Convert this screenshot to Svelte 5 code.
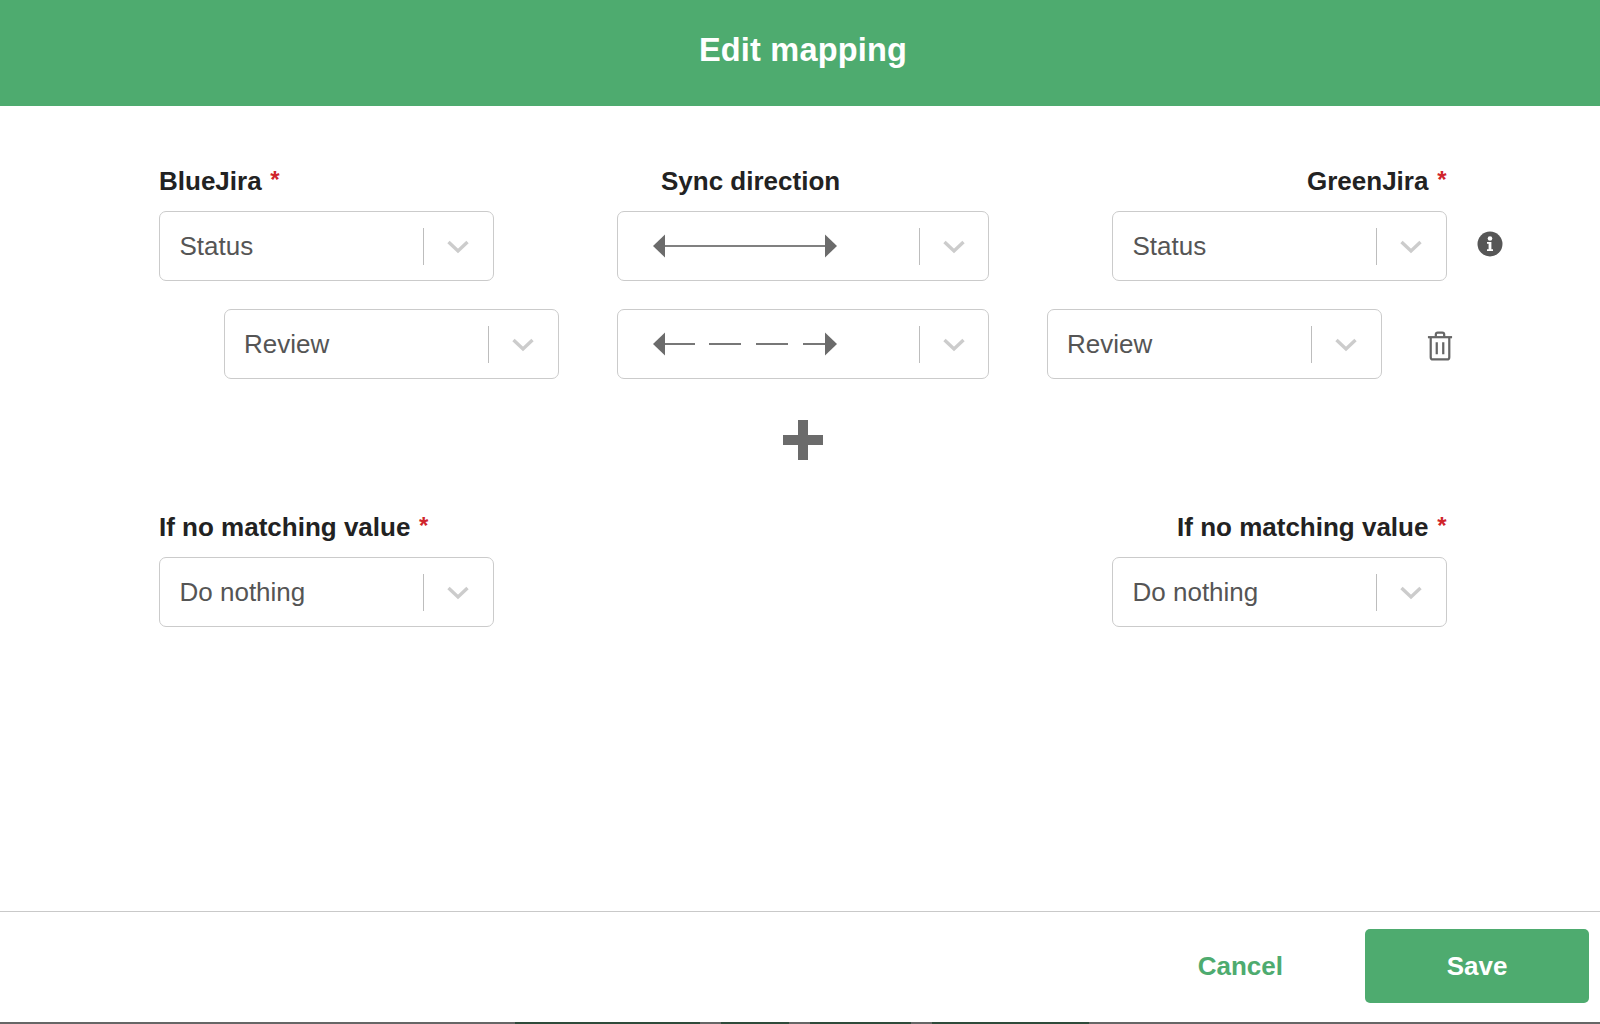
<script>
  const strip = [185, 68, 101, 157];
</script>

{#snippet chevron()}
  <span class="sep"></span>
  <svg class="chev" width="22" height="14" viewBox="0 0 22 14"><path d="M1.500 2 L11 11 L20.500 2" fill="none" stroke="#cccccc" stroke-width="3.400"/></svg>
{/snippet}

{#snippet select(text)}
  <div class="select"><span class="val">{text}</span>{@render chevron()}</div>
{/snippet}

{#snippet arrowSelect(dashed)}
  <div class="select wide">
    <span class="val arrow">
      <svg width="184" height="24" viewBox="0 0 184 24">
        {#if dashed}
          <path d="M12 12H42M56 12H88M103 12H135M150 12H172" stroke="#777" stroke-width="2" fill="none"/>
        {:else}
          <path d="M12 12H172" stroke="#808080" stroke-width="2" fill="none"/>
        {/if}
        <path d="M0 12L12 .5V23.500Z" fill="#6b6b6b"/>
        <path d="M184 12L172 .5V23.500Z" fill="#6b6b6b"/>
      </svg>
    </span>
    {@render chevron()}
  </div>
{/snippet}

<div class="modal">
  <header class="head"><h1>Edit mapping</h1></header>

  <main class="body">
    <div class="grid">
      <div class="label">BlueJira <i>*</i></div>
      <div class="label center">Sync direction</div>
      <div class="label right">GreenJira <i>*</i></div>
      <div></div>

      <div class="cell">{@render select('Status')}</div>
      {@render arrowSelect(false)}
      <div class="cell end">{@render select('Status')}</div>
      <div class="info">
        <svg width="26" height="26" viewBox="0 0 26 26"><circle cx="13" cy="13" r="12.500" fill="#565656"/><circle cx="13" cy="7.500" r="2.300" fill="#fff"/><path d="M10 11h4.400v7.200H16V20H10v-1.800h1.600v-5.400H10Z" fill="#fff"/></svg>
      </div>

      <div class="cell end">{@render select('Review')}</div>
      {@render arrowSelect(true)}
      <div class="cell withicon">
        {@render select('Review')}
        <svg class="trash" width="26" height="30" viewBox="0 0 28 32" fill="none" stroke="#666" stroke-width="2.400"><path d="M1 6.500H27"/><path d="M9.500 6V3.500q0-2 2-2h5q2 0 2 2V6"/><path d="M4 7V28q0 2.500 2.500 2.500h15Q24 30.500 24 28V7"/><path d="M10.500 12V25M17.500 12V25"/></svg>
      </div>
      <div></div>
    </div>

    <div class="plus"><span></span></div>

    <div class="nomatch">
      <div class="col">
        <div class="label">If no matching value <i>*</i></div>
        {@render select('Do nothing')}
      </div>
      <div class="col">
        <div class="label right">If no matching value <i>*</i></div>
        {@render select('Do nothing')}
      </div>
    </div>
  </main>

  <footer class="foot">
    <button class="cancel">Cancel</button>
    <button class="save">Save</button>
  </footer>
  <div class="strip">
    {#each strip as w}<span style="width:{w}px"></span>{/each}
  </div>
</div>

<style>
  :global(body) { margin: 0; background: #fff; }
  .modal {
    width: 1600px; height: 1024px; display: flex; flex-direction: column;
    font-family: "Liberation Sans", Arial, sans-serif; overflow: hidden; background: #fff;
  }
  .head {
    height: 106px; flex: none; background: #4eab6f; display: flex; align-items: center; justify-content: center;
    box-sizing: border-box; padding-left: 6px;
  }
  h1 { margin: 0 0 6px; color: #fff; font-size: 32.500px; font-weight: 700; line-height: 1.2; letter-spacing: .2px; }
  .body { flex: 1; padding: 60px 0 0 159px; box-sizing: border-box; }
  .grid {
    display: grid; grid-template-columns: 399.500px 372px 399.500px 60px;
    column-gap: 58.500px; row-gap: 28px; width: max-content;
  }
  .grid .label { margin-bottom: -14px; }
  .label { font-size: 26px; font-weight: 700; color: #222; line-height: 30px; white-space: nowrap; }
  .label i { color: #d0252b; font-style: normal; font-size: 24px; margin-left: 1.500px; position: relative; top: -2px; }
  .label.center { padding-left: 44px; }
  .label.right { text-align: right; padding-right: .5px; }
  .cell { display: flex; }
  .cell.end { justify-content: flex-end; }
  .withicon { align-items: center; gap: 45.500px; margin-left: -1px; }
  .select {
    width: 335px; height: 70px; box-sizing: border-box; flex: none;
    border: 1.500px solid #cbcbcb; border-radius: 7px; background: #fff;
    display: flex; align-items: center; padding: 0 24px 0 19.500px;
  }
  .select.wide { width: 372px; padding: 0 23px 0 35px; }
  .val { flex: 1; color: #555; font-size: 26px; line-height: 30px; }
  .arrow { display: flex; align-items: center; }
  .sep { width: 1px; height: 37px; background: #bdbdbd; margin-right: 23px; }
  .chev { display: block; flex: none; margin-top: 1px; }
  .info { display: flex; align-items: center; margin: -4px 0 0 -29px; }
  .trash { flex: none; margin-top: 3px; }
  .plus { display: flex; justify-content: center; padding: 41px 0 0; height: 40px; width: 1288px; }
  .plus span {
    width: 40px; height: 40px; border-radius: 2px; background:
      linear-gradient(#6b6b6b,#6b6b6b) center/40px 10px no-repeat,
      linear-gradient(#6b6b6b,#6b6b6b) center/10px 40px no-repeat;
  }
  .nomatch { display: flex; justify-content: space-between; width: 1288px; margin-top: 52px; }
  .col { display: flex; flex-direction: column; gap: 14px; width: 335px; }
  .foot {
    flex: none; height: 111px; box-sizing: border-box; border-top: 1.500px solid #c9c9c9;
    display: flex; align-items: center; justify-content: flex-end; padding: 0 11px 2px 0;
  }
  button { font: 700 26px "Liberation Sans", Arial, sans-serif; border: 0; cursor: pointer; }
  .cancel { background: none; color: #4eab6f; margin-right: 66px; padding: 0 16px; }
  .save { width: 224px; height: 74px; background: #4eab6f; color: #fff; border-radius: 5px; }
  .strip { flex: none; height: 2px; background: #666; display: flex; gap: 21px; padding-left: 515px; }
  .strip span { background: #2f4a3a; height: 2px; }
</style>
